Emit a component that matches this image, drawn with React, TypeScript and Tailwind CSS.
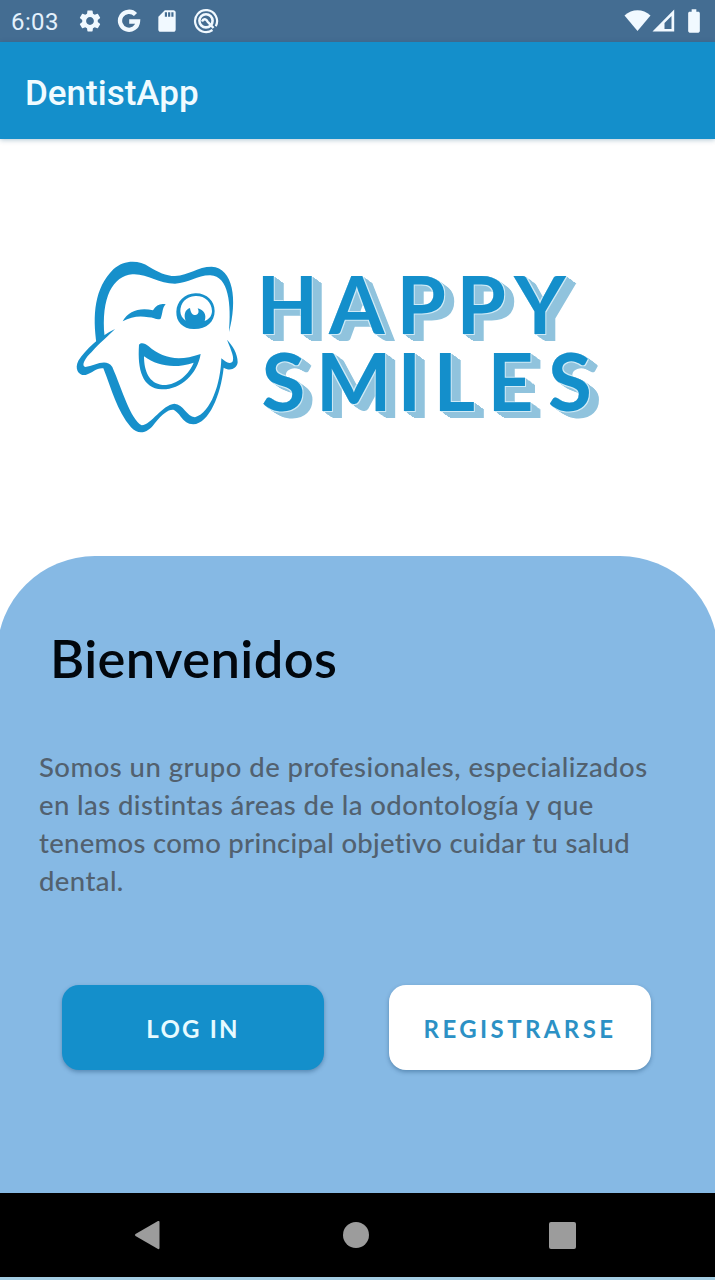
import { MdSettings, MdSdStorage, MdBatteryFull } from "react-icons/md";

const letters: { char: string; x: number; y: number }[] = [
  { char: "H", x: 256.5, y: 334 },
  { char: "A", x: 329, y: 334 },
  { char: "P", x: 396.5, y: 334 },
  { char: "P", x: 456.5, y: 334 },
  { char: "Y", x: 514, y: 334 },
  { char: "S", x: 261.5, y: 411 },
  { char: "M", x: 316, y: 411 },
  { char: "I", x: 397.5, y: 411 },
  { char: "L", x: 433.5, y: 411 },
  { char: "E", x: 487.5, y: 411 },
  { char: "S", x: 548, y: 411 },
];

function Logo() {
  return (
    <svg
      className="block h-[195px] w-[555px]"
      viewBox="65 250 555 195"
      role="img"
      aria-label="Happy Smiles"
    >
      <defs>
        {/* Extrudes the letters down and to the right, with a light rim round each face */}
        <filter
          id="extrude"
          filterUnits="userSpaceOnUse"
          x="250"
          y="255"
          width="370"
          height="185"
          colorInterpolationFilters="sRGB"
        >
          <feOffset in="SourceAlpha" dx="1" dy=".65" result="o1" />
          <feMerge result="m1">
            <feMergeNode in="SourceAlpha" />
            <feMergeNode in="o1" />
          </feMerge>
          <feOffset in="m1" dx="2" dy="1.3" result="o2" />
          <feMerge result="m2">
            <feMergeNode in="m1" />
            <feMergeNode in="o2" />
          </feMerge>
          <feOffset in="m2" dx="4" dy="2.6" result="o3" />
          <feMerge result="m3">
            <feMergeNode in="m2" />
            <feMergeNode in="o3" />
          </feMerge>
          <feOffset in="m3" dx="3" dy="2" result="o4" />
          <feMerge result="m4">
            <feMergeNode in="m3" />
            <feMergeNode in="o4" />
          </feMerge>
          <feFlood floodColor="#90c3dd" />
          <feComposite in2="m4" operator="in" result="side" />
          <feMorphology in="SourceAlpha" operator="dilate" radius="1" result="fat" />
          <feFlood floodColor="#cfeaf6" />
          <feComposite in2="fat" operator="in" result="rim" />
          <feComposite in="rim" in2="m4" operator="in" result="innerRim" />
          <feMerge>
            <feMergeNode in="side" />
            <feMergeNode in="innerRim" />
            <feMergeNode in="SourceGraphic" />
          </feMerge>
        </filter>
      </defs>
      <g transform="translate(65 250) scale(.33333)" fill="#1790cb">
        <path d="M95 284C82 195 88 115 145 58C178 28 222 30 252 50C280 66 302 78 330 78C372 76 398 50 440 50C505 53 518 150 492 246C499 165 492 78 436 76C398 75 372 99 330 101C280 101 246 70 202 73C145 78 107 140 119 262Z" />
        <path d="M150 237C104 258 61 300 40 332C27 358 42 378 62 375C84 368 94 353 115 355C142 422 154 480 198 532C222 558 250 548 270 519C292 492 309 478 325 479C349 490 350 520 385 523C432 520 467 436 476 353C493 364 516 358 518 337C518 310 502 286 486 269C500 304 509 324 502 336C490 344 482 334 469 325C467 400 438 488 390 502C364 499 356 463 328 461C291 465 260 523 230 526C196 507 172 420 142 351C123 323 90 347 61 351C47 348 61 323 80 306C105 277 131 257 150 237Z" />
        <path d="M173 214C190 183 224 172 264 181C274 165 286 159 302 163C291 174 294 190 287 206C276 212 268 202 250 202C222 196 198 201 173 214Z" />
        <path
          fillRule="evenodd"
          d="M391 130C425 129 449 153 449 183C449 216 424 238 386 237C353 236 333 215 334 185C335 154 359 131 391 130ZM391 138C362 139 346 160 346 184C346 196 353 206 362 212C356 196 359 179 375 174C377 190 383 195 391 195C401 195 403 184 398 175C416 180 426 194 419 213C434 207 441 196 441 183C440 156 420 137 391 138Z"
        />
        <path
          fillRule="evenodd"
          d="M222 284C230 276 240 281 251 289C291 324 339 336 407 312C397 374 345 420 290 418C232 414 217 360 222 284ZM237 319C237 365 253 400 292 405C337 407 373 371 386 338C331 356 279 350 237 319Z"
        />
      </g>
      <g
        fontFamily="Lato, sans-serif"
        fontWeight="700"
        fontSize="80"
        fill="#148fcb"
        filter="url(#extrude)"
      >
        {letters.map((l, i) => (
          <text key={i} x={l.x} y={l.y}>
            {l.char}
          </text>
        ))}
      </g>
    </svg>
  );
}

function StatusBar() {
  return (
    <div className="flex h-[42px] items-center bg-[#446d92] pl-[11px] pr-[7px] text-[#f1f9ff]">
      <span className="w-[66px] pt-[2px] text-[24px] leading-none tracking-[0.4px] text-[#e4f1fc]">6:03</span>
      <MdSettings className="h-[26px] w-[26px]" />
      <svg className="ml-[13.500px] h-[24px] w-[24px]" viewBox="0 0 24 24" fill="none" stroke="currentColor" strokeWidth="4.300">
        <path d="M18.500 5.500A9 9 0 1 0 21 12.500H12.200" />
      </svg>
      <MdSdStorage className="ml-[13px] h-[26px] w-[26px]" />
      <svg className="ml-[13px] h-[26px] w-[26px]" viewBox="0 0 26 26" fill="none" stroke="currentColor">
        <path d="M19.500 22A11 11 0 1 1 22.800 18.200" strokeWidth="2.200" />
        <circle cx="13" cy="12.800" r="6.600" strokeWidth="2.600" />
        <path d="M9 13.500C10.500 10 13.500 11 14.500 13.500L20.500 20" strokeWidth="2.400" />
      </svg>
      <div className="ml-auto flex items-center">
        <svg className="h-[24px] w-[27px]" viewBox="0 0 27 24" fill="currentColor">
          <path d="M.5 6.500C8 -.5 19 -.5 26.500 6.500L13.500 22Z" />
        </svg>
        <svg className="ml-[1px] h-[24px] w-[23px]" viewBox="0 0 23 24" fill="currentColor">
          <path fillRule="evenodd" d="M.5 22.500L22.200 .5V22.500ZM12.500 14V20H19.500V7Z" />
        </svg>
        <MdBatteryFull className="ml-[5px] h-[28px] w-[28px]" />
      </div>
    </div>
  );
}

export default function App() {
  return (
    <div className="flex h-[1280px] w-[715px] flex-col overflow-hidden bg-white font-['Roboto',sans-serif]">
      <StatusBar />
      <header className="z-10 flex h-[97px] shrink-0 items-center bg-[#148fcb] pl-[25px] pt-[5px] shadow-[0_1px_5px_rgba(0,70,110,0.3)]">
        <h1 className="text-[35px] font-medium leading-none text-[#f0fbff]">DentistApp</h1>
      </header>
      <main className="flex flex-1 flex-col">
        <div className="h-[417px] shrink-0 pl-[65px] pt-[111px]">
          <Logo />
        </div>
        <section className="-mx-[3px] flex-1 rounded-t-[98px] bg-[#86b9e4] px-[3px] font-['Lato',sans-serif]">
          <h2 className="ml-[50px] mt-[70px] whitespace-nowrap text-[52.5px] font-semibold leading-[64px] tracking-[0.4px] text-[#02070d]">
            Bienvenidos
          </h2>
          <p className="ml-[39px] mt-[58px] whitespace-nowrap text-[27.5px] font-medium leading-[38px] text-[#52616f]">
            <span className="block tracking-[0.46px]">Somos un grupo de profesionales, especializados</span>
            <span className="block tracking-[0.41px]">en las distintas áreas de la odontología y que</span>
            <span className="block tracking-[0.29px]">tenemos como principal objetivo cuidar tu salud</span>
            <span className="block tracking-[0.4px]">dental.</span>
          </p>
          <div className="ml-[62px] mt-[85px] flex gap-[65px]">
            <button className="h-[85px] w-[262px] rounded-[17px] bg-[#148fcb] pt-[2px] text-[24px] font-bold tracking-[2.2px] text-[#e6faff] shadow-[0_2px_4px_rgba(0,50,90,0.35)]">
              LOG IN
            </button>
            <button className="h-[85px] w-[262px] rounded-[17px] bg-white pt-[2px] text-[24px] font-bold tracking-[3.400px] text-[#2c91c5] shadow-[0_2px_4px_rgba(0,50,90,0.35)]">
              REGISTRARSE
            </button>
          </div>
        </section>
      </main>
      <nav className="flex h-[87px] shrink-0 items-center border-b-[3px] border-[#a3cde2] bg-black pl-[134px] text-[#9c9c9c]">
        <svg className="h-[30px] w-[26px]" viewBox="0 0 26 30" fill="currentColor">
          <path d="M1.500 14L24 1Q25.500 .5 25.500 2V28Q25.500 29.500 24 29L1.500 16Q.3 15 1.500 14Z" />
        </svg>
        <div className="ml-[183px] h-[26px] w-[26px] rounded-full bg-[#9c9c9c]" />
        <div className="ml-[180px] h-[27px] w-[27px] rounded-[2px] bg-[#9c9c9c]" />
      </nav>
    </div>
  );
}
